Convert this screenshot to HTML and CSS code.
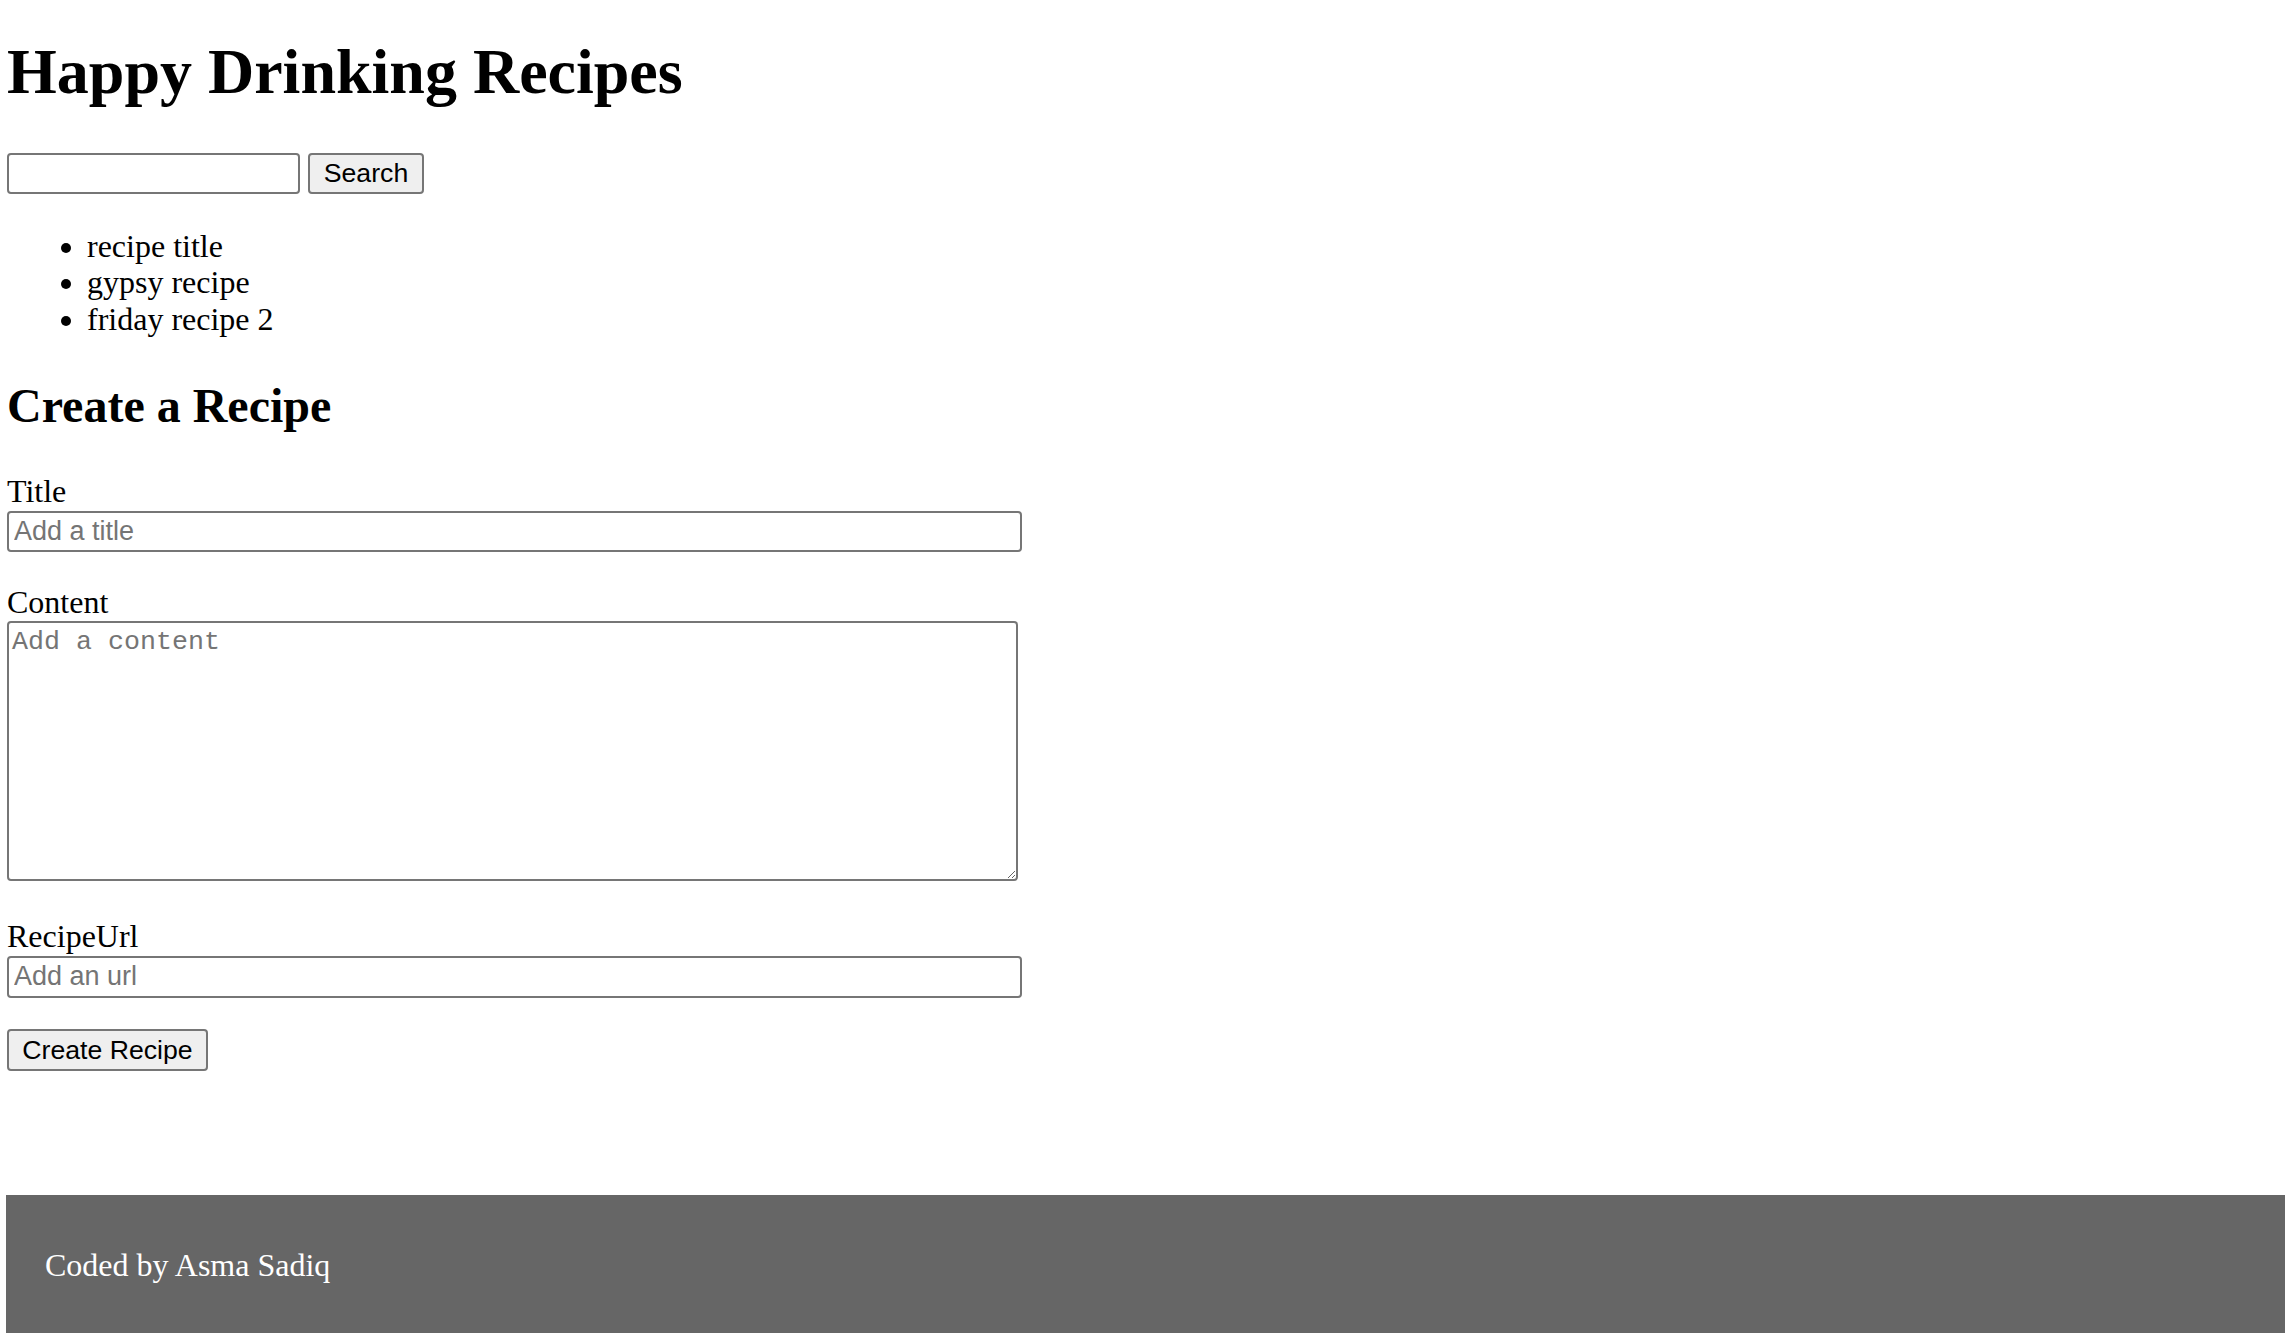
FILE: index.html
```html
<!DOCTYPE html>
<html lang="en">
<head>
<meta charset="utf-8">
<title>Happy Drinking Recipes</title>
<link rel="stylesheet" href="styles.css">
</head>
<body>
<main class="page">
  <h1 class="title">Happy Drinking Recipes</h1>
  <div class="search">
    <input class="search-input" type="text">
    <button class="btn btn-search" type="button">Search</button>
  </div>
  <ul class="recipes">
    <li>recipe title</li>
    <li>gypsy recipe</li>
    <li>friday recipe 2</li>
  </ul>
  <h2 class="subtitle">Create a Recipe</h2>
  <form class="create-form">
    <div class="field">
      <label class="field-label">Title</label>
      <input class="text-input" type="text" placeholder="Add a title">
    </div>
    <div class="field">
      <label class="field-label">Content</label>
      <textarea class="text-area" placeholder="Add a content"></textarea>
    </div>
    <div class="field field-url">
      <label class="field-label">RecipeUrl</label>
      <input class="text-input text-input-url" type="text" placeholder="Add an url">
    </div>
    <button class="btn btn-create" type="button">Create Recipe</button>
  </form>
</main>
<footer class="footer">
  <p class="footer-text">Coded by Asma Sadiq</p>
</footer>
</body>
</html>
```

FILE: styles.css
```css
html, body {
  background: #fff;
}
body {
  margin: 0;
  padding: 0 0 0 7px;
  font-family: "Liberation Serif", "Times New Roman", serif;
  font-size: 32px;
  line-height: 36.8px;
  color: #000;
}
.title {
  font-size: 64px;
  line-height: 74px;
  font-weight: bold;
  margin: 35px 0 0;
}
.search {
  display: flex;
  align-items: flex-start;
  gap: 8px;
  margin-top: 44px;
}
.search-input {
  box-sizing: border-box;
  width: 293px;
  height: 41px;
  border: 2px solid #767676;
  border-radius: 4px;
  background: #fff;
  margin: 0;
  padding: 0 4px;
  font-family: "Liberation Sans", Arial, sans-serif;
  font-size: 26.67px;
}
.btn {
  box-sizing: border-box;
  height: 41px;
  margin: 0;
  padding: 0;
  border: 2px solid #767676;
  border-radius: 4px;
  background: #efefef;
  color: #000;
  font-family: "Liberation Sans", Arial, sans-serif;
  font-size: 26.67px;
  line-height: 1;
  text-align: center;
}
.btn-search {
  width: 116px;
}
.recipes {
  margin: 33.5px 0 0;
  padding-left: 80px;
  line-height: 36.8px;
}
.subtitle {
  font-size: 48px;
  line-height: 55px;
  font-weight: bold;
  margin: 40px 0 0;
}
.create-form {
  margin-top: 40px;
}
.field {
  display: flex;
  flex-direction: column;
  align-items: flex-start;
}
.field + .field {
  margin-top: 32px;
}
.field-url {
  margin-top: 37px !important;
}
.field-label {
  display: block;
  line-height: 37px;
}
.text-input {
  box-sizing: border-box;
  width: 1015px;
  height: 41px;
  margin: 1px 0 0;
  padding: 0 5px;
  border: 2px solid #767676;
  border-radius: 4px;
  background: #fff;
  font-family: "Liberation Sans", Arial, sans-serif;
  font-size: 27px;
  color: #000;
}
.text-input-url {
  height: 42px;
}
.text-input::placeholder {
  color: #757575;
}
.text-area {
  box-sizing: border-box;
  width: 1011px;
  height: 260px;
  margin: 0;
  padding: 4px 3px;
  border: 2px solid #767676;
  border-radius: 4px;
  background: #fff;
  font-family: "Liberation Mono", "Courier New", monospace;
  font-size: 26.67px;
  line-height: 1.15;
  color: #000;
}
.text-area::placeholder {
  color: #757575;
}
.btn-create {
  display: block;
  width: 201px;
  height: 42px;
  margin-top: 31px;
}
.footer {
  margin: 124px 0 0 -1px;
  padding: 20px 39px;
  background: #666;
  color: #fff;
}
.footer-text {
  margin: 32px 0;
  line-height: 37px;
}
```
